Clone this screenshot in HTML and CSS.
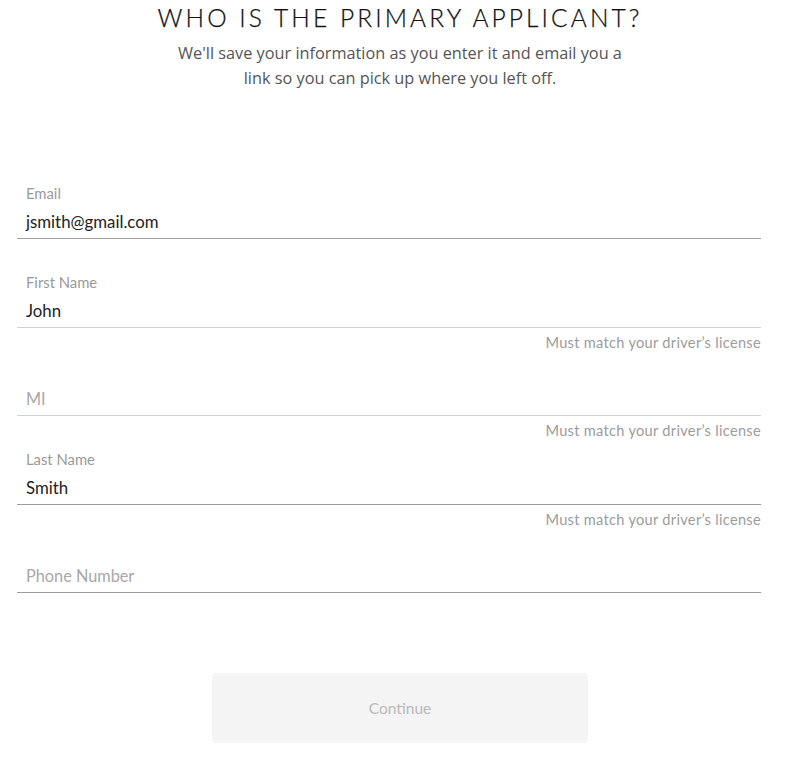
FILE: index.html
```html
<!DOCTYPE html>
<html>
<head>
<meta charset="utf-8">
<link rel="stylesheet" href="styles.css">
</head>
<body>
<main class="page">
  <header class="intro">
    <h1 class="title">WHO IS THE PRIMARY APPLICANT?</h1>
    <p class="subtitle">We'll save your information as you enter it and email you a<br>link so you can pick up where you left off.</p>
  </header>
  <form class="form">
    <div class="field">
      <div class="label">Email</div>
      <div class="value line-dark">jsmith@gmail.com</div>
    </div>
    <div class="field">
      <div class="label">First Name</div>
      <div class="value line-light">John</div>
      <div class="hint">Must match your driver’s license</div>
    </div>
    <div class="field">
      <div class="label"></div>
      <div class="value placeholder line-light">MI</div>
      <div class="hint">Must match your driver’s license</div>
    </div>
    <div class="field">
      <div class="label">Last Name</div>
      <div class="value line-dark">Smith</div>
      <div class="hint">Must match your driver’s license</div>
    </div>
    <div class="field">
      <div class="label"></div>
      <div class="value placeholder line-dark">Phone Number</div>
    </div>
    <div class="actions">
      <button type="button" class="continue">Continue</button>
    </div>
  </form>
</main>
</body>
</html>
```

FILE: styles.css
```css
html, body {
  margin: 0;
  padding: 0;
  background: #ffffff;
}
.page {
  width: 800px;
  height: 770px;
  overflow: hidden;
}
.intro {
  text-align: center;
  padding-top: 3px;
}
.title {
  margin: 0;
  font-family: Lato, "Liberation Sans", sans-serif;
  font-weight: 300;
  font-size: 24.5px;
  line-height: 30px;
  letter-spacing: 3.1px;
  color: #111111;
  -webkit-text-stroke: 0.25px #111111;
}
.subtitle {
  margin: 8px 0 0;
  font-family: "Open Sans", sans-serif;
  font-size: 16.3px;
  line-height: 25px;
  color: #555555;
}
.form {
  margin-top: 92px;
  padding: 0 39px 0 17px;
}
.field {
  height: 88.5px;
  display: flex;
  flex-direction: column;
  font-family: Lato, "Liberation Sans", sans-serif;
}
.label {
  height: 20px;
  line-height: 20px;
  font-size: 14.8px;
  color: #9a9a9a;
  padding-left: 9px;
}
.value {
  margin-top: 7px;
  height: 24px;
  line-height: 24px;
  padding: 0 0 4px 9px;
  font-size: 16.8px;
  color: #222222;
}
.placeholder {
  color: #a8a8a8;
  font-size: 16.3px;
}
.line-dark {
  border-bottom: 1px solid #9e9e9e;
}
.line-light {
  border-bottom: 1px solid #d2d2d2;
}
.hint {
  margin-top: 6px;
  line-height: 18px;
  font-size: 14.6px;
  text-align: right;
  color: #9c9c9c;
  letter-spacing: 0.3px;
}
.actions {
  display: flex;
  justify-content: center;
  margin-top: 47px;
  padding-left: 22px;
}
.continue {
  width: 376px;
  height: 70px;
  border: none;
  border-radius: 3px;
  background: #f4f4f4;
  color: #b9b9b9;
  font-family: Lato, "Liberation Sans", sans-serif;
  font-size: 15.5px;
}
```
